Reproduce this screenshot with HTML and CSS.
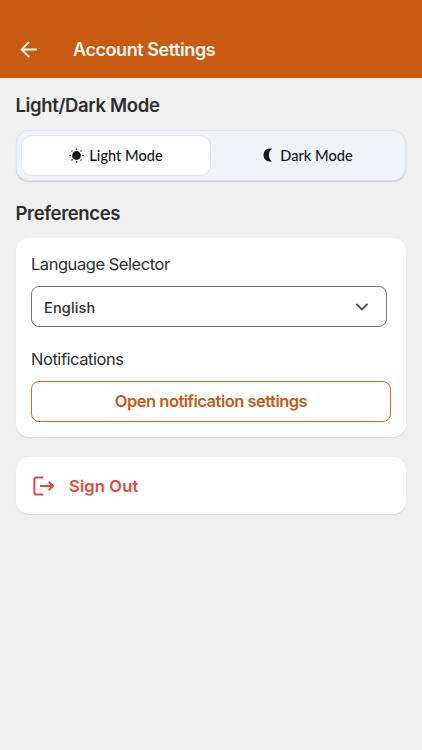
FILE: index.html
```html
<!DOCTYPE html>
<html lang="en">
<head>
<meta charset="utf-8">
<meta name="viewport" content="width=device-width, initial-scale=1">
<title>Account Settings</title>
<link rel="stylesheet" href="styles.css">
</head>
<body>
<header class="app-bar">
  <svg class="back" viewBox="0 0 18 18"><path d="M16.200 8.500H1.600M8.600 1.500 1.600 8.500l7 7"/></svg>
  <h1 class="title"><span>Account Settings</span></h1>
</header>
<main class="content">
  <h2 class="heading"><span>Light/Dark Mode</span></h2>
  <div class="segmented">
    <div class="segment active">
      <svg class="sun" viewBox="0 0 16 16"><circle cx="8" cy="8" r="4.700"/><circle cx="8" cy="1.2" r=".8"/><circle cx="8" cy="14.8" r=".8"/><circle cx="1.2" cy="8" r=".8"/><circle cx="14.8" cy="8" r=".8"/><circle cx="3.200" cy="3.200" r=".8"/><circle cx="12.800" cy="3.200" r=".8"/><circle cx="3.200" cy="12.800" r=".8"/><circle cx="12.800" cy="12.800" r=".8"/></svg>
      <span class="mode-label">Light Mode</span>
    </div>
    <div class="segment dark">
      <svg class="moon" viewBox="0 0 10 14"><path d="M9.300.7C7.300 1.500 5.900 3.900 5.900 7s1.400 5.500 3.400 6.300C4.500 14.500.5 11.500.5 7S4.500-.5 9.300.7Z"/></svg>
      <span class="mode-label">Dark Mode</span>
    </div>
  </div>
  <h2 class="heading preferences"><span>Preferences</span></h2>
  <section class="card">
    <div class="label language"><span>Language Selector</span></div>
    <div class="select">
      <span class="value">English</span>
      <svg class="chevron" viewBox="0 0 12 8"><path d="m1 1.500 5 5 5-5"/></svg>
    </div>
    <div class="label notifications"><span>Notifications</span></div>
    <button class="outline-button"><span>Open notification settings</span></button>
  </section>
  <section class="card sign-out">
    <svg class="exit" viewBox="0 0 22 20"><path d="M10.300 1.400H3.200Q1.400 1.400 1.400 3.200V16.800Q1.400 18.600 3.200 18.600H10.300M7 10H20M15.800 5.800 20 10l-4.200 4.200"/></svg>
    <span class="sign-out-label">Sign Out</span>
  </section>
</main>
</body>
</html>
```
FILE: styles.css
```css
* { box-sizing: border-box; }
body {
  margin: 0;
  min-height: 750px;
  background: #f0f0f0;
  color: #2e2e2e;
  font-family: Inter, sans-serif;
}
svg { display: block; flex: none; fill: none; stroke-linecap: round; stroke-linejoin: round; }
h1, h2 { margin: 0; }
.app-bar {
  height: 78px;
  padding: 21px 0 0 20px;
  display: flex;
  align-items: center;
  background: #c85a11;
  color: #fff8f0;
}
.back { width: 18px; height: 18px; stroke: currentColor; stroke-width: 1.9; }
.title { margin-left: 35px; font-size: 18px; line-height: 24px; font-weight: 600; letter-spacing: -.43px; }
.content { padding: 15px 16px; }
.heading { height: 26px; margin-left: -.5px; font-size: 18.5px; line-height: 24px; font-weight: 600; letter-spacing: -.36px; }
.segmented {
  height: 51px;
  margin-top: 11px;
  padding: 4px;
  display: grid;
  grid-template-columns: 190px 1fr;
  border: 1px solid #e0e3ea;
  border-radius: 13px;
  background: #f0f4f9;
  box-shadow: 0 1px 1px #c9cbd1;
}
.segment { height: 41px; padding-bottom: 1px; display: flex; align-items: center; justify-content: center; color: #14191d; }
.active { background: #fff; border: 1px solid #dfe3eb; border-radius: 11px; }
.dark { padding-left: 4px; }
.sun, .moon { fill: currentColor; }
.sun { width: 15px; height: 15px; margin-right: 5px; }
.moon { width: 10px; height: 14px; margin-right: 7px; }
.mode-label { padding-top: 1px; font-family: Lato, sans-serif; font-size: 14.6px; font-weight: 500; line-height: 20px; }
.preferences { margin-top: 20px; }
.card { background: #fff; border-radius: 13px; box-shadow: 0 1px 1px #d6d6d6; }
.preferences + .card { height: 199px; margin-top: 11px; padding: 14px 15px 0; }
.label { height: 24px; font-size: 16.5px; line-height: 24px; font-weight: 400; letter-spacing: -.46px; }
.select {
  width: 356px;
  height: 41px;
  margin-top: 10px;
  padding: 1px 18px 0 12px;
  display: flex;
  align-items: center;
  justify-content: space-between;
  border: 1px solid #77777a;
  border-radius: 8px;
}
.value { font-size: 14.5px; font-weight: 450; letter-spacing: .15px; }
.chevron { width: 12px; height: 8px; stroke: #555; stroke-width: 1.9; }
.notifications { margin-top: 20px; }
.outline-button {
  display: block;
  width: 360px;
  height: 41px;
  margin-top: 10px;
  padding: 0 0 1px;
  border: 1px solid #c86c30;
  border-radius: 8px;
  background: #fff;
  color: #c45b18;
  font: 600 16.5px/24px Inter, sans-serif;
  letter-spacing: -.51px;
}
.sign-out { height: 57px; margin-top: 20px; padding-left: 17px; display: flex; align-items: center; color: #df4b40; }
.exit { width: 22px; height: 20px; stroke: currentColor; stroke-width: 2; stroke-linecap: butt; }
.sign-out-label { margin-left: 14px; font-size: 16.5px; font-weight: 600; letter-spacing: .15px; }
```
